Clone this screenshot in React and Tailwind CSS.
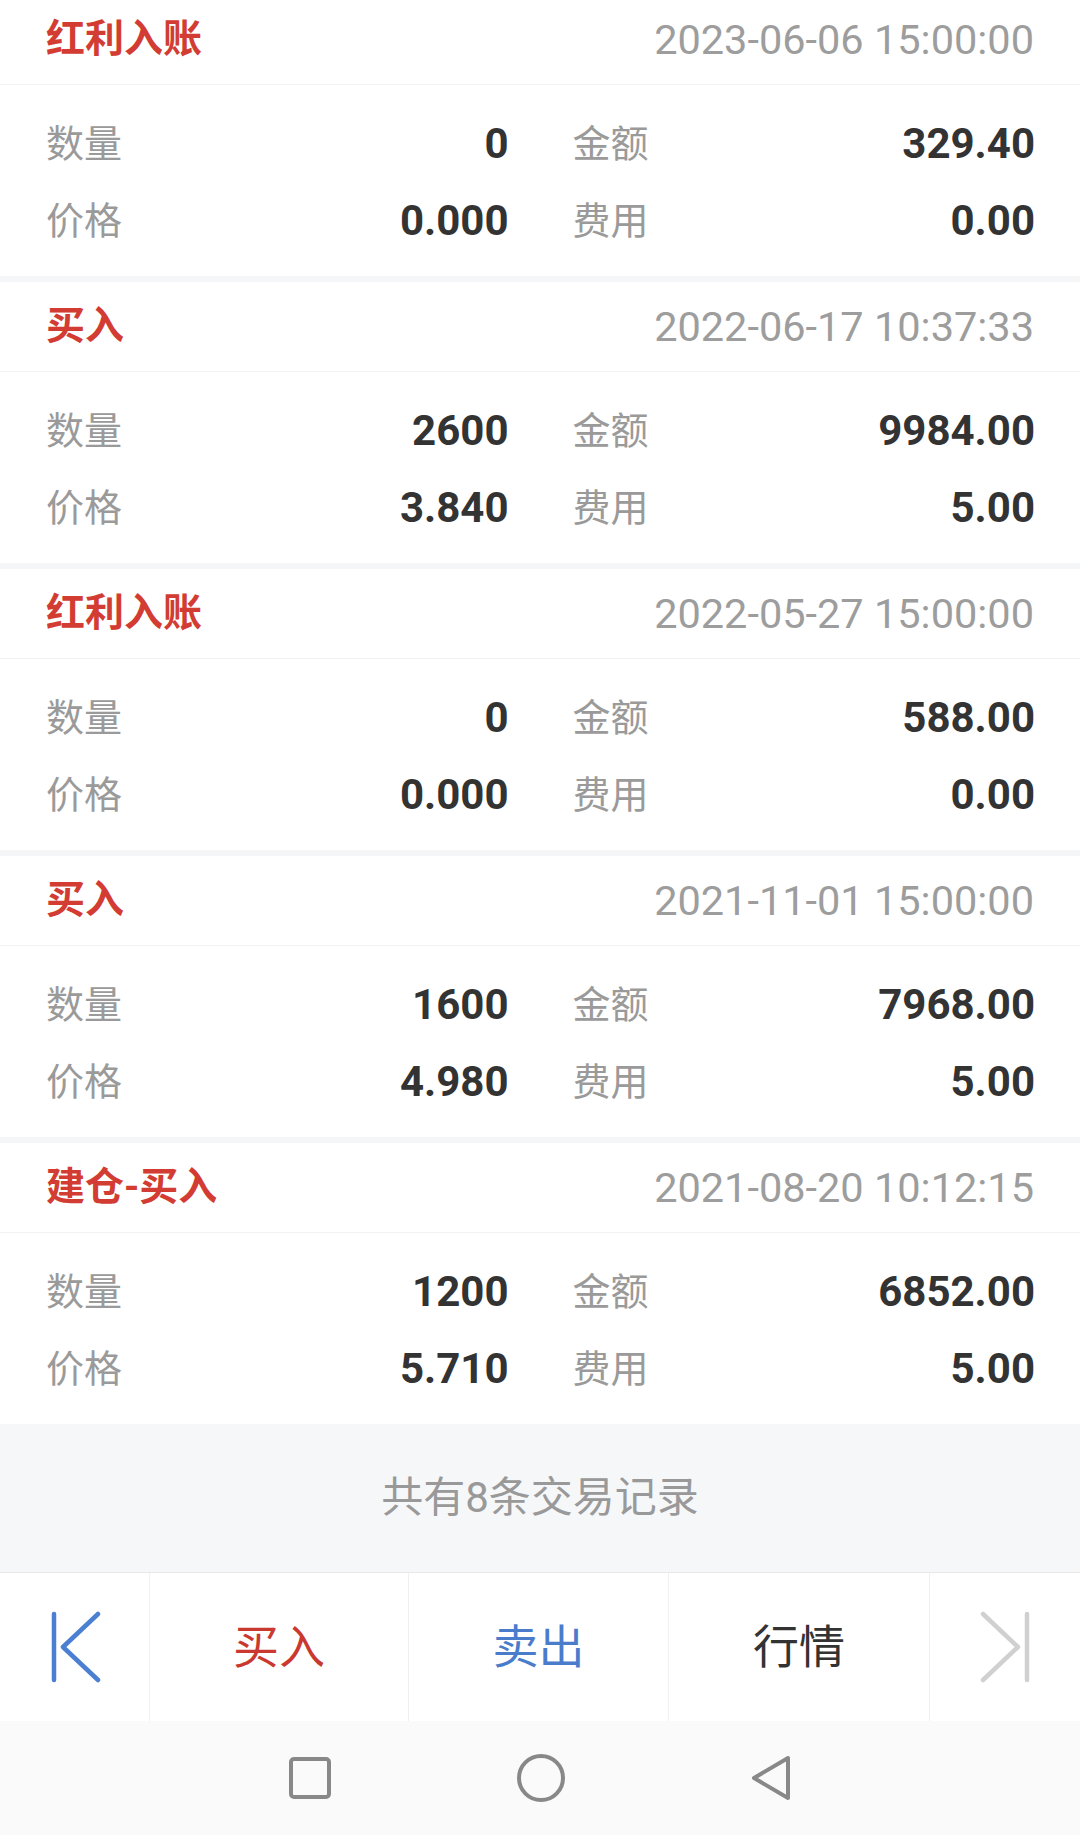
import React from "react";

const records = [
    { type: "红利入账", time: "2023-06-06 15:00:00", qty: "0", amount: "329.40", price: "0.000", fee: "0.00" },
    { type: "买入", time: "2022-06-17 10:37:33", qty: "2600", amount: "9984.00", price: "3.840", fee: "5.00" },
    { type: "红利入账", time: "2022-05-27 15:00:00", qty: "0", amount: "588.00", price: "0.000", fee: "0.00" },
    { type: "买入", time: "2021-11-01 15:00:00", qty: "1600", amount: "7968.00", price: "4.980", fee: "5.00" },
    { type: "建仓-买入", time: "2021-08-20 10:12:15", qty: "1200", amount: "6852.00", price: "5.710", fee: "5.00" },
];

function Cell({ label, value })
{
    return (
        <div className="h-[77px] flex items-center justify-between">
            <span className="text-[38px] leading-none text-[#9a9a9a]">{label}</span>
            <span className="text-[42px] leading-none font-bold text-[#333333]">{value}</span>
        </div>
    );
}

function RecordCard({ rec })
{
    return (
        <div className="bg-white">
            <div className="h-[90px] px-[46px] flex items-center justify-between border-b border-[#f2f2f2]">
                <span className="text-[39px] leading-none font-bold text-[#d23c32]">{rec.type}</span>
                <span className="text-[41.5px] leading-none text-[#9d9d9d]">{rec.time}</span>
            </div>
            <div className="pl-[46px] pr-[45px] pt-[20px] pb-[17px] grid grid-cols-2 gap-x-[64px]">
                <Cell label="数量" value={rec.qty} />
                <Cell label="金额" value={rec.amount} />
                <Cell label="价格" value={rec.price} />
                <Cell label="费用" value={rec.fee} />
            </div>
        </div>
    );
}

export default function App()
{
    return (
        <div
            className="w-[1080px] h-[1835px] overflow-hidden bg-white flex flex-col"
            style={{ fontFamily: "Roboto, 'Noto Sans CJK SC', sans-serif" }}
        >
            <div className="-mt-[5px] flex flex-col gap-[6px] bg-[#f5f6f8]">
                {records.map((rec) => (
                    <RecordCard key={rec.time} rec={rec} />
                ))}
            </div>

            <div className="h-[148px] bg-[#f6f7f9] flex items-center justify-center">
                <span className="text-[42px] leading-none text-[#999999]">共有8条交易记录</span>
            </div>

            <div className="h-[149px] border-t border-[#e8e8e8] bg-white grid grid-cols-[150px_259px_260px_261px_150px]">
                <div className="flex items-center justify-center border-r border-[#f0f0f0] pl-[2px]">
                    <svg width="52" height="72" viewBox="0 0 52 72" fill="none" stroke="#4a7fd2" strokeWidth="4.5" strokeLinecap="round" strokeLinejoin="round">
                        <line x1="4" y1="3" x2="4" y2="69" />
                        <polyline points="48,3 13,36 48,69" />
                    </svg>
                </div>
                <div className="flex items-center justify-center border-r border-[#f0f0f0]">
                    <span className="text-[46px] leading-none text-[#c9392f]">买入</span>
                </div>
                <div className="flex items-center justify-center border-r border-[#f0f0f0]">
                    <span className="text-[46px] leading-none text-[#4a7ccc]">卖出</span>
                </div>
                <div className="flex items-center justify-center border-r border-[#f0f0f0]">
                    <span className="text-[46px] leading-none text-[#333333]">行情</span>
                </div>
                <div className="flex items-center justify-center">
                    <svg width="52" height="72" viewBox="0 0 52 72" fill="none" stroke="#d0d0d0" strokeWidth="4.5" strokeLinecap="round" strokeLinejoin="round">
                        <polyline points="4,3 39,36 4,69" />
                        <line x1="48" y1="3" x2="48" y2="69" />
                    </svg>
                </div>
            </div>

            <div className="flex-1 bg-[#fafafa] flex items-center justify-center gap-[186px]">
                <svg width="42" height="42" viewBox="0 0 42 42" fill="none" stroke="#888888" strokeWidth="4">
                    <rect x="2" y="2" width="38" height="38" rx="3" />
                </svg>
                <svg width="48" height="48" viewBox="0 0 48 48" fill="none" stroke="#888888" strokeWidth="4">
                    <circle cx="24" cy="24" r="22" />
                </svg>
                <svg width="40" height="46" viewBox="0 0 40 46" fill="none" stroke="#888888" strokeWidth="4" strokeLinejoin="round">
                    <path d="M3 23 L37 3 L37 43 Z" />
                </svg>
            </div>
        </div>
    );
}
